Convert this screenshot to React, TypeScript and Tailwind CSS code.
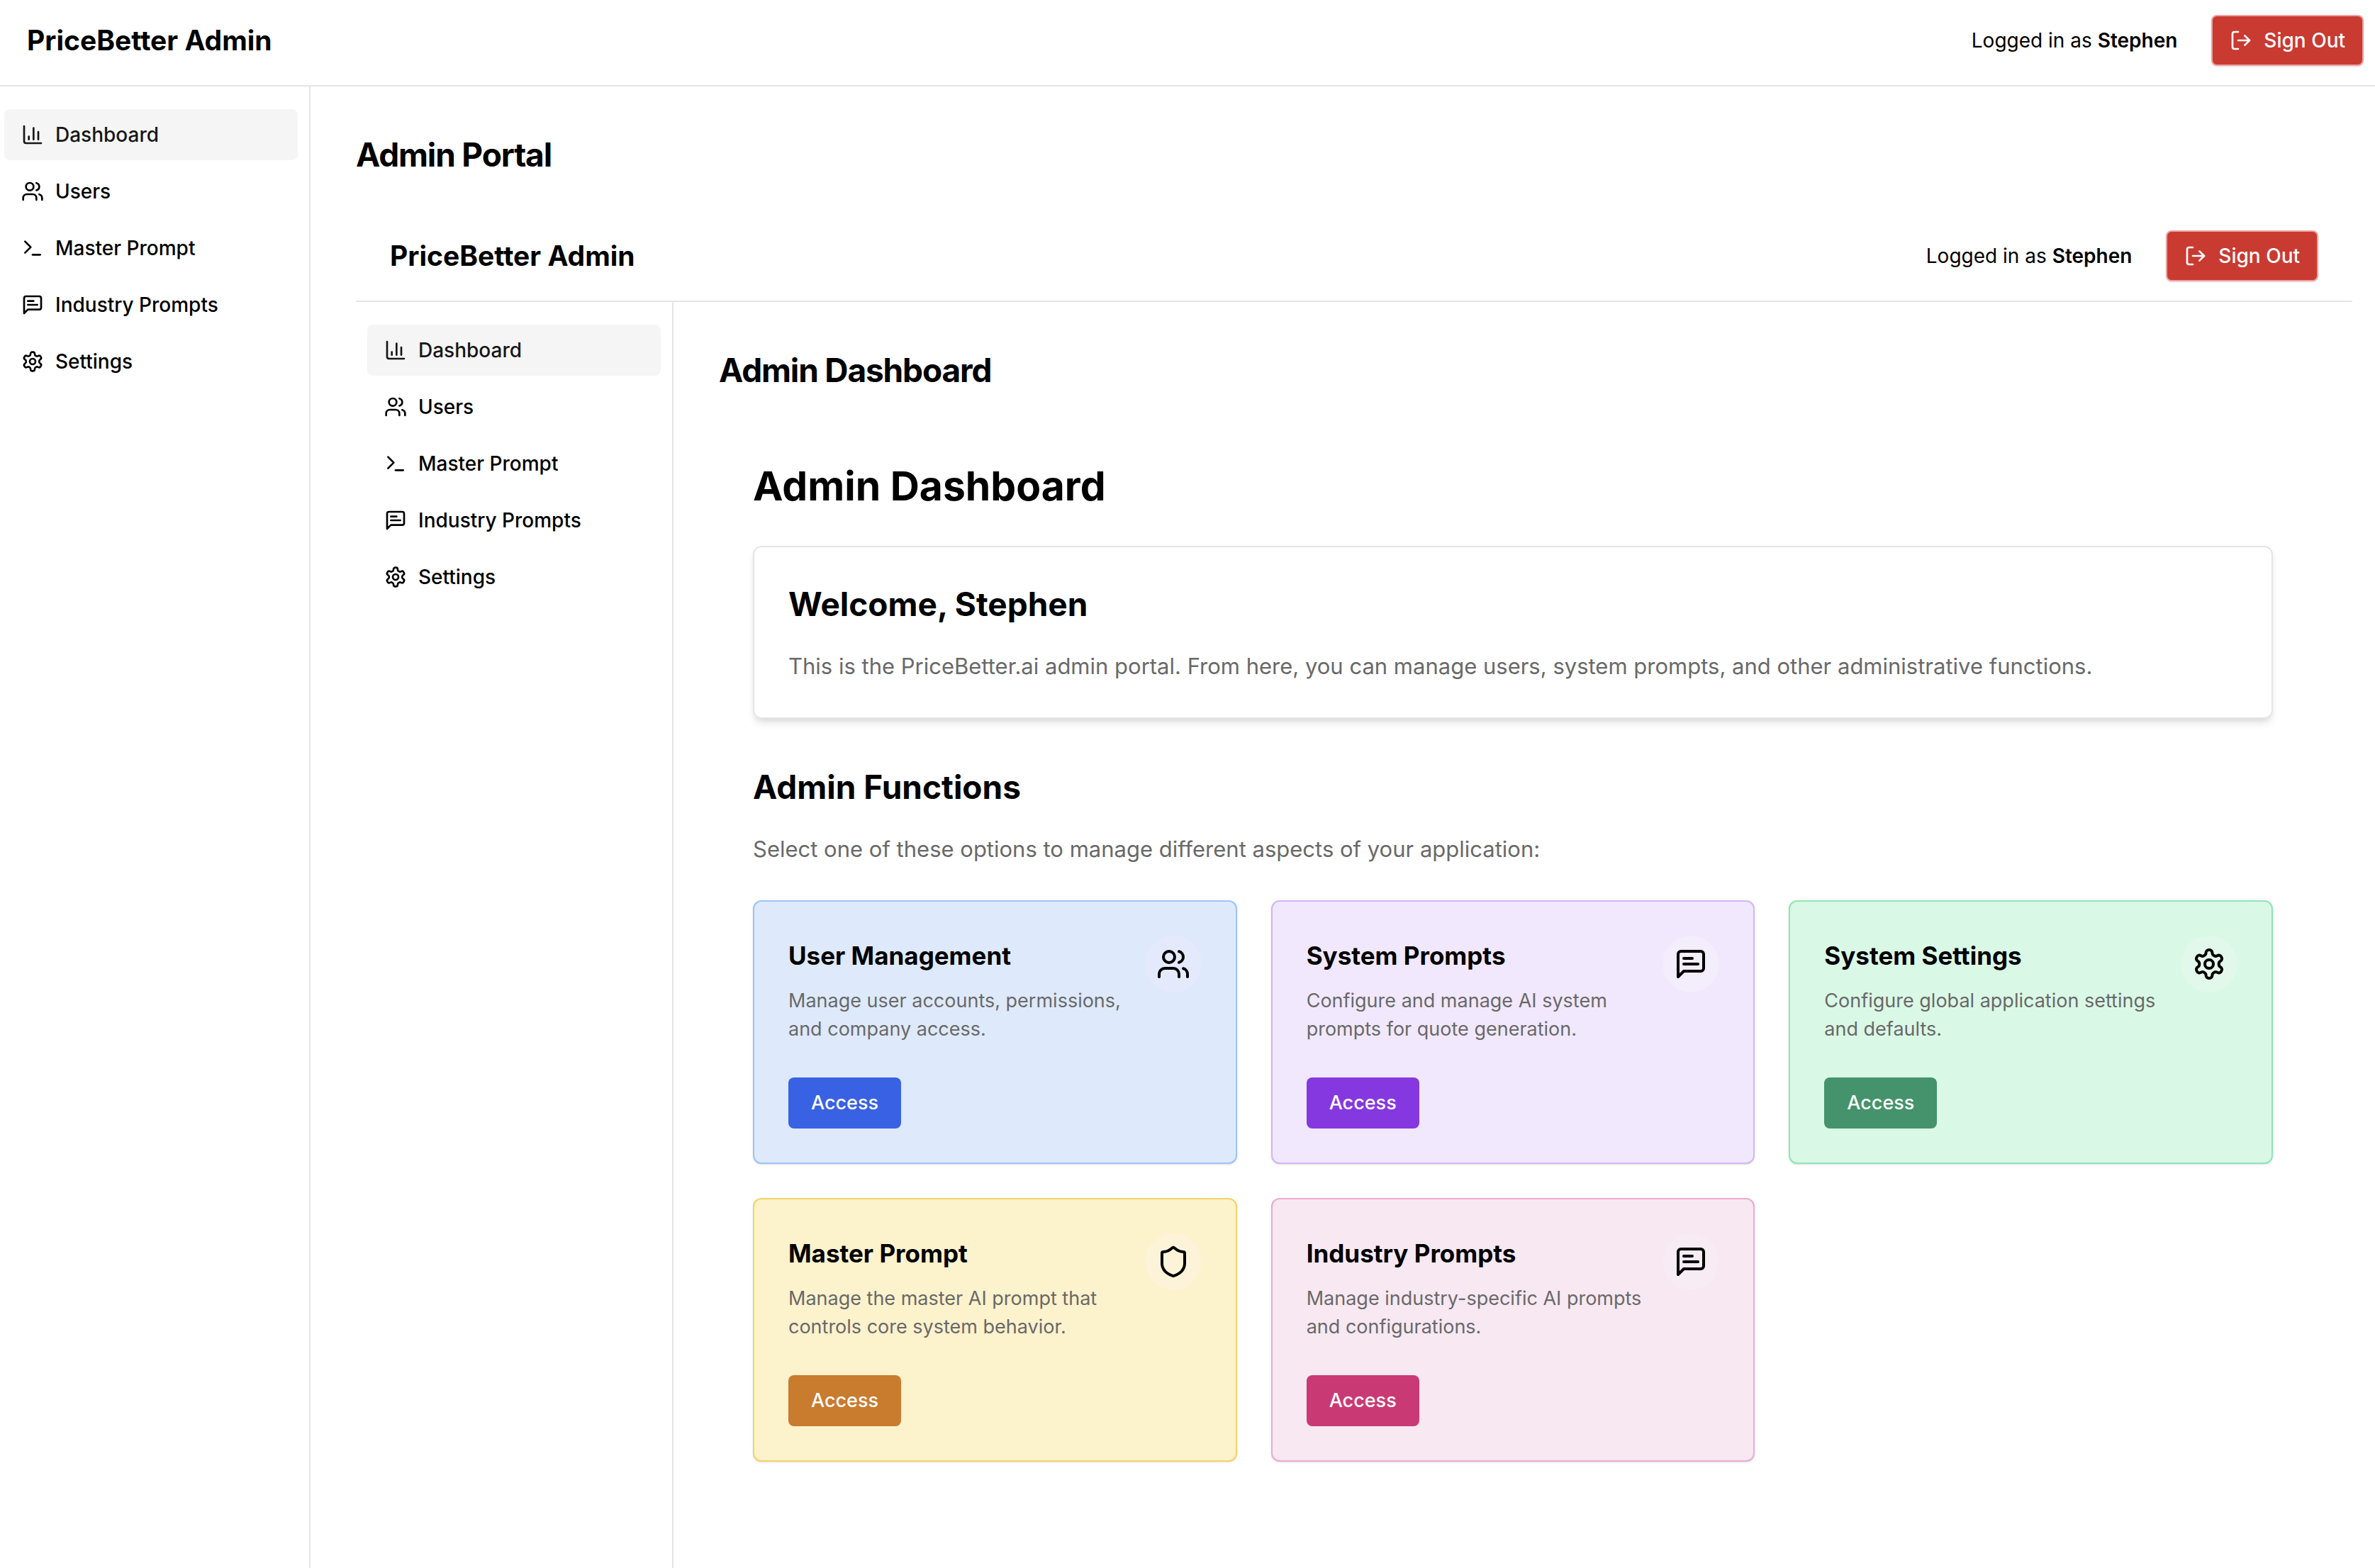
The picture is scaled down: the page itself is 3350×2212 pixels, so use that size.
import type { ComponentType, ReactNode, SVGProps } from "react";
import { ChartColumn, LogOut, Shield, Terminal, Users } from "lucide-react";

type IconType = ComponentType<SVGProps<SVGSVGElement>>;

const outline: SVGProps<SVGSVGElement> = {
  viewBox: "0 0 24 24",
  fill: "none",
  stroke: "currentColor",
  strokeWidth: 2,
  strokeLinecap: "round",
  strokeLinejoin: "round",
};

function MessageIcon(props: SVGProps<SVGSVGElement>) {
  return (
    <svg {...outline} {...props}>
      <path d="M21 15a2 2 0 0 1-2 2H7l-4 4V5a2 2 0 0 1 2-2h14a2 2 0 0 1 2 2z" />
      <path d="M13 8H7" />
      <path d="M17 12H7" />
    </svg>
  );
}

function GearIcon(props: SVGProps<SVGSVGElement>) {
  return (
    <svg {...outline} {...props}>
      <path d="M12.22 2h-.44a2 2 0 0 0-2 2v.18a2 2 0 0 1-1 1.73l-.43.25a2 2 0 0 1-2 0l-.15-.08a2 2 0 0 0-2.73.73l-.22.38a2 2 0 0 0 .73 2.73l.15.1a2 2 0 0 1 1 1.72v.51a2 2 0 0 1-1 1.74l-.15.09a2 2 0 0 0-.73 2.73l.22.38a2 2 0 0 0 2.73.73l.15-.08a2 2 0 0 1 2 0l.43.25a2 2 0 0 1 1 1.73V20a2 2 0 0 0 2 2h.44a2 2 0 0 0 2-2v-.18a2 2 0 0 1 1-1.73l.43-.25a2 2 0 0 1 2 0l.15.08a2 2 0 0 0 2.73-.73l.22-.39a2 2 0 0 0-.73-2.73l-.15-.08a2 2 0 0 1-1-1.74v-.5a2 2 0 0 1 1-1.74l.15-.09a2 2 0 0 0 .73-2.73l-.22-.38a2 2 0 0 0-2.73-.73l-.15.08a2 2 0 0 1-2 0l-.43-.25a2 2 0 0 1-1-1.73V4a2 2 0 0 0-2-2z" />
      <circle cx="12" cy="12" r="3" />
    </svg>
  );
}

const navItems: { label: string; icon: IconType }[] = [
  { label: "Dashboard", icon: ChartColumn },
  { label: "Users", icon: Users },
  { label: "Master Prompt", icon: Terminal },
  { label: "Industry Prompts", icon: MessageIcon },
  { label: "Settings", icon: GearIcon },
];

const cards: {
  title: string;
  text: string;
  icon: IconType;
  card: string;
  circle: string;
  button: string;
}[] = [
  {
    title: "User Management",
    text: "Manage user accounts, permissions, and company access.",
    icon: Users,
    card: "bg-[#dee9fb] border-[#9dc4f8]",
    circle: "bg-[#e4eafb]",
    button: "bg-[#3862e3]",
  },
  {
    title: "System Prompts",
    text: "Configure and manage AI system prompts for quote generation.",
    icon: MessageIcon,
    card: "bg-[#f1e8fd] border-[#d2b6f8]",
    circle: "bg-[#f3edfc]",
    button: "bg-[#8538df]",
  },
  {
    title: "System Settings",
    text: "Configure global application settings and defaults.",
    icon: GearIcon,
    card: "bg-[#daf8e6] border-[#8fe5b5]",
    circle: "bg-[#e1f8ea]",
    button: "bg-[#45936c]",
  },
  {
    title: "Master Prompt",
    text: "Manage the master AI prompt that controls core system behavior.",
    icon: Shield,
    card: "bg-[#fcf2cc] border-[#f4d465]",
    circle: "bg-[#fdf3d8]",
    button: "bg-[#c97b2e]",
  },
  {
    title: "Industry Prompts",
    text: "Manage industry-specific AI prompts and configurations.",
    icon: MessageIcon,
    card: "bg-[#f7e8f2] border-[#ecabd2]",
    circle: "bg-[#f7ebf4]",
    button: "bg-[#c93a75]",
  },
];

function Shell({ heading, children }: { heading: string; children: ReactNode }) {
  return (
    <div className="flex grow flex-col">
      <header className="flex h-32 shrink-0 items-center justify-between border-b-2 border-[#e5e5e5] px-12">
        <span className="text-[39px] leading-[56px] font-bold">PriceBetter Admin</span>
        <div className="flex items-center gap-12">
          <span className="text-[28px] leading-10">
            Logged in as <strong className="font-semibold">Stephen</strong>
          </span>
          <button
            type="button"
            className="flex h-[72px] items-center gap-4 rounded-lg border-2 border-[#eda3a1] bg-[#c93a31] px-6 text-[28px] leading-10 font-medium text-white shadow-sm"
          >
            <LogOut className="size-8" />
            Sign Out
          </button>
        </div>
      </header>
      <div className="flex grow">
        <nav className="flex w-[448px] shrink-0 flex-col gap-2 border-r-2 border-[#e5e5e5] px-4 py-8">
          {navItems.map(({ label, icon: Icon }, i) => (
            <a
              key={label}
              href="#"
              className={
                i === 0
                  ? "flex h-[72px] items-center gap-4 rounded-lg bg-[#f5f5f5] px-6 text-[28px] leading-10 font-medium text-[#171717]"
                  : "flex h-[72px] items-center gap-4 rounded-lg px-6 text-[28px] leading-10 font-medium"
              }
            >
              <Icon className="size-8" />
              {label}
            </a>
          ))}
        </nav>
        <main className="flex min-w-0 grow flex-col px-16 pt-16">
          <h1 className="mb-12 text-[46px] leading-[64px] font-bold tracking-tight">{heading}</h1>
          {children}
        </main>
      </div>
    </div>
  );
}

function Dashboard() {
  return (
    <div className="p-12">
      <h2 className="mb-12 text-[57px] leading-[72px] font-bold">Admin Dashboard</h2>
      <section className="mb-16 rounded-xl border-2 border-[#e5e5e5] p-12 shadow-[0_8px_12px_-2px_rgba(0,0,0,0.1),0_4px_8px_-4px_rgba(0,0,0,0.1)]">
        <h3 className="mb-8 text-[46px] leading-[64px] font-bold">Welcome, Stephen</h3>
        <p className="text-[31px] leading-[48px] text-[#696969]">
          This is the PriceBetter.ai admin portal. From here, you can manage users, system prompts, and other
          administrative functions.
        </p>
      </section>
      <h3 className="mb-8 text-[46px] leading-[64px] font-bold">Admin Functions</h3>
      <p className="mb-12 text-[31px] leading-[48px] text-[#696969]">
        Select one of these options to manage different aspects of your application:
      </p>
      <div className="grid grid-cols-3 gap-12">
        {cards.map(({ title, text, icon: Icon, card, circle, button }) => (
          <article key={title} className={`rounded-xl border-2 p-12 shadow-sm ${card}`}>
            <div className="mb-12 flex items-start justify-between">
              <div>
                <h4 className="mb-4 text-[35px] leading-[56px] font-bold">{title}</h4>
                <p className="text-[27px] leading-10 text-[#696969]">{text}</p>
              </div>
              <span className={`flex size-20 shrink-0 items-center justify-center rounded-full ${circle}`}>
                <Icon className="size-12" />
              </span>
            </div>
            <button
              type="button"
              className={`flex h-[72px] items-center rounded-lg px-8 text-[27px] leading-10 font-medium text-white ${button}`}
            >
              Access
            </button>
          </article>
        ))}
      </div>
    </div>
  );
}

export default function App() {
  return (
    <div className="flex min-h-screen flex-col overflow-hidden bg-white font-['Inter',sans-serif] text-black">
      <div className="-mt-1.5 -mr-8 -ml-2.5 flex grow flex-col">
        <Shell heading="Admin Portal">
          <Shell heading="Admin Dashboard">
            <Dashboard />
          </Shell>
        </Shell>
      </div>
    </div>
  );
}
